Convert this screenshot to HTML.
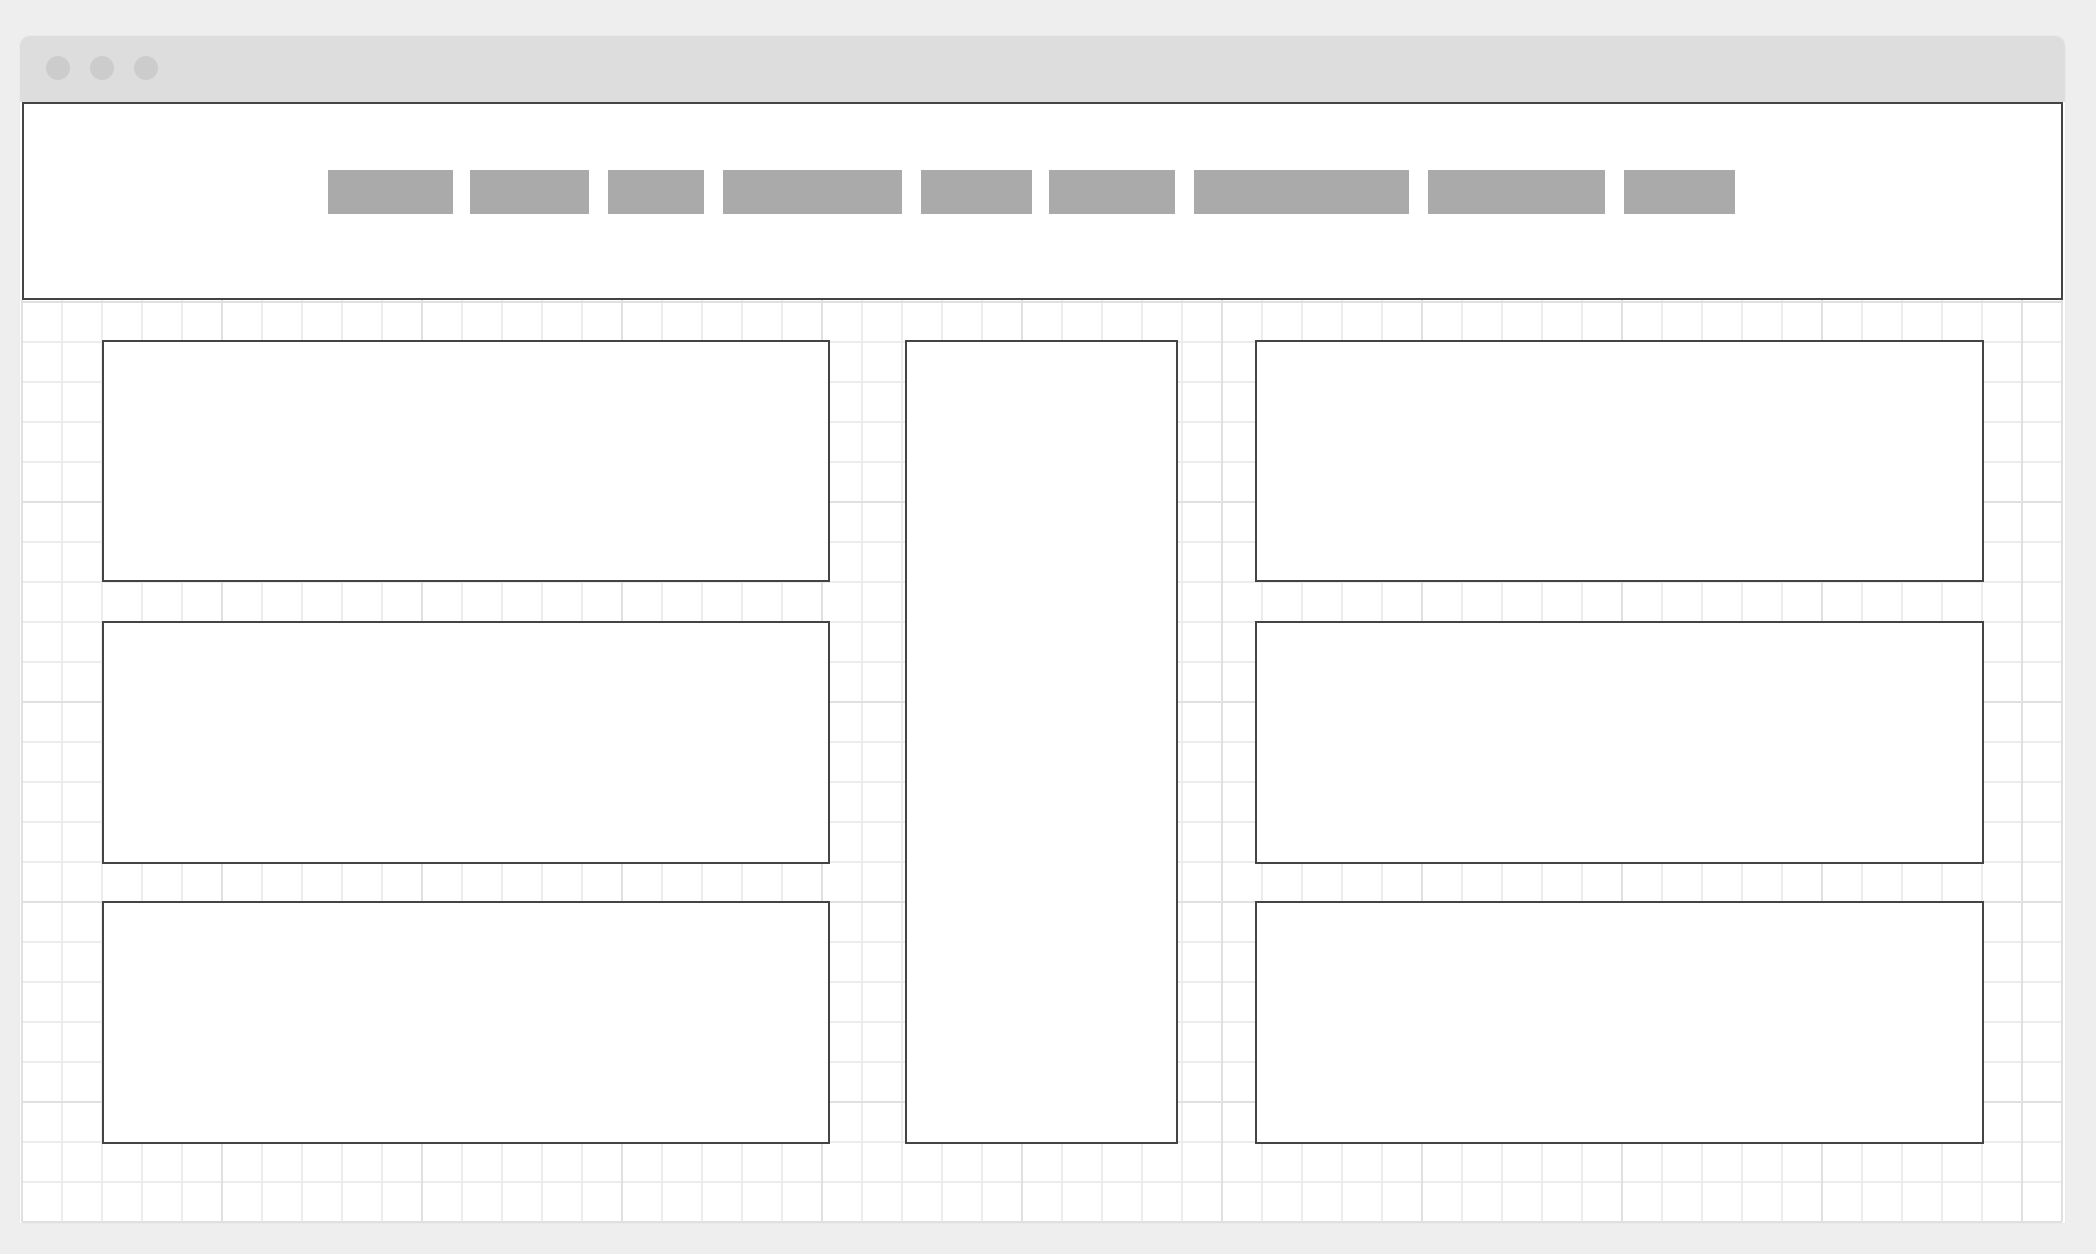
<!DOCTYPE html>
<html><head><style>
html,body{margin:0;padding:0;background:#eeeeee;width:2096px;height:1254px;overflow:hidden;position:relative}
.win{position:absolute;left:20px;top:36px;width:2045px;height:1187px;background:#fff;border-radius:10px 10px 0 0;overflow:hidden;box-shadow:0 0 2px rgba(0,0,0,0.05)}
.tb{position:absolute;left:0;top:0;width:100%;height:66px;background:#dddddd}
.dot{position:absolute;top:20px;width:24px;height:24px;border-radius:50%;background:#cccccc}
.nav{position:absolute;left:22px;top:102px;width:2037px;height:194px;border:2px solid #444;background:#fff}
.btn{position:absolute;top:170px;height:44px;background:#aaaaaa}
.p{position:absolute;border:2px solid #444;background:#fff;box-sizing:border-box}
</style></head><body>
<div class="win">
<div class="tb"><div class="dot" style="left:26px"></div><div class="dot" style="left:70px"></div><div class="dot" style="left:114px"></div></div>
</div>
<svg style="position:absolute;left:0;top:0" width="2096" height="1254">
<g stroke="#ececec" stroke-width="2">
<path d="M62 300V1222M102 300V1222M142 300V1222M182 300V1222M262 300V1222M302 300V1222M342 300V1222M382 300V1222M462 300V1222M502 300V1222M542 300V1222M582 300V1222M662 300V1222M702 300V1222M742 300V1222M782 300V1222M862 300V1222M902 300V1222M942 300V1222M982 300V1222M1062 300V1222M1102 300V1222M1142 300V1222M1182 300V1222M1262 300V1222M1302 300V1222M1342 300V1222M1382 300V1222M1462 300V1222M1502 300V1222M1542 300V1222M1582 300V1222M1662 300V1222M1702 300V1222M1742 300V1222M1782 300V1222M1862 300V1222M1902 300V1222M1942 300V1222M1982 300V1222"/>
<path d="M22 342H2062M22 382H2062M22 422H2062M22 462H2062M22 542H2062M22 582H2062M22 622H2062M22 662H2062M22 742H2062M22 782H2062M22 822H2062M22 862H2062M22 942H2062M22 982H2062M22 1022H2062M22 1062H2062M22 1142H2062M22 1182H2062"/>
</g>
<g stroke="#e0e0e0" stroke-width="2">
<path d="M22 300V1222M222 300V1222M422 300V1222M622 300V1222M822 300V1222M1022 300V1222M1222 300V1222M1422 300V1222M1622 300V1222M1822 300V1222M2022 300V1222M2062 300V1222"/>
<path d="M22 302H2062M22 502H2062M22 702H2062M22 902H2062M22 1102H2062M22 1222H2062"/>
</g>
</svg>
<div class="nav"></div>
<div class="btn" style="left:328px;width:125px"></div>
<div class="btn" style="left:470px;width:119px"></div>
<div class="btn" style="left:608px;width:96px"></div>
<div class="btn" style="left:723px;width:179px"></div>
<div class="btn" style="left:921px;width:111px"></div>
<div class="btn" style="left:1049px;width:126px"></div>
<div class="btn" style="left:1194px;width:215px"></div>
<div class="btn" style="left:1428px;width:177px"></div>
<div class="btn" style="left:1624px;width:111px"></div>
<div class="p" style="left:102px;top:340px;width:728px;height:242px"></div>
<div class="p" style="left:102px;top:621px;width:728px;height:243px"></div>
<div class="p" style="left:102px;top:901px;width:728px;height:243px"></div>
<div class="p" style="left:905px;top:340px;width:273px;height:804px"></div>
<div class="p" style="left:1255px;top:340px;width:729px;height:242px"></div>
<div class="p" style="left:1255px;top:621px;width:729px;height:243px"></div>
<div class="p" style="left:1255px;top:901px;width:729px;height:243px"></div>
</body></html>
